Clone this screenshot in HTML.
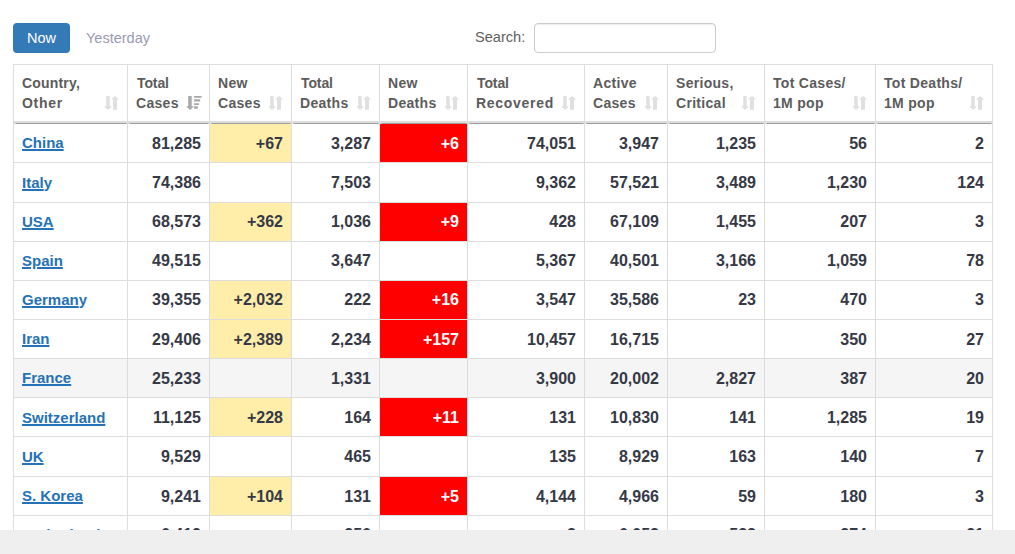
<!DOCTYPE html>
<html><head><meta charset="utf-8">
<style>
*{box-sizing:border-box}
html,body{margin:0;padding:0;background:#fff;width:1015px;height:554px;overflow:hidden}
body{font-family:"Liberation Sans",sans-serif;font-size:14px;line-height:20px;color:#333;position:relative}
.pill{position:absolute;left:13px;top:23px;width:57px;height:30px;background:#337ab7;color:#fff;border-radius:4px;text-align:center;line-height:30px;font-size:14.5px}
.yest{position:absolute;left:86px;top:23px;line-height:30px;color:#9a9ab4;font-size:14.5px}
.slabel{position:absolute;left:475px;top:27px;line-height:20px;color:#606060;font-size:14.6px}
.sinput{position:absolute;left:534px;top:23px;width:182px;height:30px;border:1px solid #ccc;border-radius:4px;background:#fff;box-shadow:inset 0 1px 1px rgba(0,0,0,.075)}
table{position:absolute;left:13px;top:64px;border-collapse:collapse;table-layout:fixed;width:980px}
th,td{border:1px solid #ddd;padding:0 8px;overflow:hidden;white-space:nowrap}
th{height:57px;text-align:left;vertical-align:middle;font-size:14px;line-height:20px;color:#5c5c5c;font-weight:bold;letter-spacing:.3px;border-bottom:2px solid #ddd;position:relative}
td{vertical-align:top;padding-top:var(--p);font-size:16px;font-weight:bold;text-align:right;color:#363945;line-height:22px}
td:first-child{text-align:left;font-size:15px;padding-top:var(--q)}
td a{color:#2572b8;text-decoration:underline;text-decoration-thickness:2px;text-underline-offset:1px}
.t{margin-left:1px;letter-spacing:-.1px}
td a.nu{text-decoration:none}
td.y{background:#ffeeaa}
td.r{background:#ff0000;color:#fff}
tr.g td{background:#f5f5f5}
.ic{position:absolute;right:7px;top:31px}
.hl{position:absolute;top:123px;height:1px}
.bottom{position:absolute;left:0;top:530px;width:1015px;height:24px;background:#efefef}
</style></head><body>
<div class="pill">Now</div><div class="yest">Yesterday</div>
<div class="slabel">Search:</div><div class="sinput"></div>
<table>
<colgroup><col style="width:114px"><col style="width:82px"><col style="width:82px"><col style="width:88px"><col style="width:88px"><col style="width:117px"><col style="width:83px"><col style="width:97px"><col style="width:111px"><col style="width:117px"></colgroup>
<thead><tr>
<th><span style="letter-spacing:.18px">Country,</span><br><span style="letter-spacing:.7px">Other</span><svg class="ic" width="16" height="15" viewBox="0 0 16 15"><path fill="#e0e0e0" d="M2.2 0h3.5v10.2h2.3L4.05 14 .1 10.2h2.1zM11.1 0l4 3.6h-2.1v10.1H9V3.6H7.1z"/></svg></th><th><span class="t">Total</span><br>Cases<svg class="ic" width="16" height="15" viewBox="0 0 16 15"><path fill="#a8a8a8" d="M2.2 0h3.5v10.2h2.3L4.05 14 .1 10.2h2.1zM8.1 0h7.5v1.7H8.1zM8.1 3.2h6.1v2.4H8.1zM8.1 7.3h4.9v1.6H8.1zM8.1 10.2h3.7v2.6H8.1z"/></svg></th><th>New<br>Cases<svg class="ic" width="16" height="15" viewBox="0 0 16 15"><path fill="#e0e0e0" d="M2.2 0h3.5v10.2h2.3L4.05 14 .1 10.2h2.1zM11.1 0l4 3.6h-2.1v10.1H9V3.6H7.1z"/></svg></th><th><span class="t">Total</span><br>Deaths<svg class="ic" width="16" height="15" viewBox="0 0 16 15"><path fill="#e0e0e0" d="M2.2 0h3.5v10.2h2.3L4.05 14 .1 10.2h2.1zM11.1 0l4 3.6h-2.1v10.1H9V3.6H7.1z"/></svg></th><th>New<br>Deaths<svg class="ic" width="16" height="15" viewBox="0 0 16 15"><path fill="#e0e0e0" d="M2.2 0h3.5v10.2h2.3L4.05 14 .1 10.2h2.1zM11.1 0l4 3.6h-2.1v10.1H9V3.6H7.1z"/></svg></th><th><span class="t">Total</span><br><span style="letter-spacing:.7px">Recovered</span><svg class="ic" width="16" height="15" viewBox="0 0 16 15"><path fill="#e0e0e0" d="M2.2 0h3.5v10.2h2.3L4.05 14 .1 10.2h2.1zM11.1 0l4 3.6h-2.1v10.1H9V3.6H7.1z"/></svg></th><th>Active<br>Cases<svg class="ic" width="16" height="15" viewBox="0 0 16 15"><path fill="#e0e0e0" d="M2.2 0h3.5v10.2h2.3L4.05 14 .1 10.2h2.1zM11.1 0l4 3.6h-2.1v10.1H9V3.6H7.1z"/></svg></th><th>Serious,<br>Critical<svg class="ic" width="16" height="15" viewBox="0 0 16 15"><path fill="#e0e0e0" d="M2.2 0h3.5v10.2h2.3L4.05 14 .1 10.2h2.1zM11.1 0l4 3.6h-2.1v10.1H9V3.6H7.1z"/></svg></th><th>Tot Cases/<br>1M pop<svg class="ic" width="16" height="15" viewBox="0 0 16 15"><path fill="#e0e0e0" d="M2.2 0h3.5v10.2h2.3L4.05 14 .1 10.2h2.1zM11.1 0l4 3.6h-2.1v10.1H9V3.6H7.1z"/></svg></th><th>Tot Deaths/<br>1M pop<svg class="ic" width="16" height="15" viewBox="0 0 16 15"><path fill="#e0e0e0" d="M2.2 0h3.5v10.2h2.3L4.05 14 .1 10.2h2.1zM11.1 0l4 3.6h-2.1v10.1H9V3.6H7.1z"/></svg></th>
</tr></thead>
<tbody>
<tr style="height:41px;--p:10px;--q:9px"><td><a>China</a></td><td>81,285</td><td class="y">+67</td><td>3,287</td><td class="r">+6</td><td>74,051</td><td>3,947</td><td>1,235</td><td>56</td><td>2</td></tr>
<tr style="height:40px;--p:9px;--q:9px"><td><a>Ital</a><a class="nu">y</a></td><td>74,386</td><td></td><td>7,503</td><td></td><td>9,362</td><td>57,521</td><td>3,489</td><td>1,230</td><td>124</td></tr>
<tr style="height:39px;--p:8px;--q:8px"><td><a>USA</a></td><td>68,573</td><td class="y">+362</td><td>1,036</td><td class="r">+9</td><td>428</td><td>67,109</td><td>1,455</td><td>207</td><td>3</td></tr>
<tr style="height:39px;--p:8px;--q:8px"><td><a>Spain</a></td><td>49,515</td><td></td><td>3,647</td><td></td><td>5,367</td><td>40,501</td><td>3,166</td><td>1,059</td><td>78</td></tr>
<tr style="height:39px;--p:8px;--q:8px"><td><a>German</a><a class="nu">y</a></td><td>39,355</td><td class="y">+2,032</td><td>222</td><td class="r">+16</td><td>3,547</td><td>35,586</td><td>23</td><td>470</td><td>3</td></tr>
<tr style="height:39px;--p:9px;--q:8px"><td><a>Iran</a></td><td>29,406</td><td class="y">+2,389</td><td>2,234</td><td class="r">+157</td><td>10,457</td><td>16,715</td><td></td><td>350</td><td>27</td></tr>
<tr style="height:39px;--p:9px;--q:8px" class="g"><td><a>France</a></td><td>25,233</td><td></td><td>1,331</td><td></td><td>3,900</td><td>20,002</td><td>2,827</td><td>387</td><td>20</td></tr>
<tr style="height:39px;--p:9px;--q:9px"><td><a>Switzerland</a></td><td>11,125</td><td class="y">+228</td><td>164</td><td class="r">+11</td><td>131</td><td>10,830</td><td>141</td><td>1,285</td><td>19</td></tr>
<tr style="height:40px;--p:9px;--q:9px"><td><a>UK</a></td><td>9,529</td><td></td><td>465</td><td></td><td>135</td><td>8,929</td><td>163</td><td>140</td><td>7</td></tr>
<tr style="height:39px;--p:9px;--q:8px"><td><a>S. Korea</a></td><td>9,241</td><td class="y">+104</td><td>131</td><td class="r">+5</td><td>4,144</td><td>4,966</td><td>59</td><td>180</td><td>3</td></tr>
<tr style="height:39px;--p:8px;--q:8px"><td><a>Netherlands</a></td><td>6,412</td><td></td><td>356</td><td></td><td>3</td><td>6,053</td><td>533</td><td>374</td><td>21</td></tr>
</tbody></table>
<div class="hl" style="left:13px;width:980px;background:#dedede"></div><div class="hl" style="left:15px;width:112px;background:#c4c4c4"></div><div class="hl" style="left:16px;width:110px;background:#9e9e9e"></div><div class="hl" style="left:129px;width:80px;background:#c4c4c4"></div><div class="hl" style="left:130px;width:78px;background:#9e9e9e"></div><div class="hl" style="left:211px;width:80px;background:#c4c4c4"></div><div class="hl" style="left:212px;width:78px;background:#9e9e9e"></div><div class="hl" style="left:293px;width:86px;background:#c4c4c4"></div><div class="hl" style="left:294px;width:84px;background:#9e9e9e"></div><div class="hl" style="left:381px;width:86px;background:#c4c4c4"></div><div class="hl" style="left:382px;width:84px;background:#9e9e9e"></div><div class="hl" style="left:469px;width:115px;background:#c4c4c4"></div><div class="hl" style="left:470px;width:113px;background:#9e9e9e"></div><div class="hl" style="left:586px;width:81px;background:#c4c4c4"></div><div class="hl" style="left:587px;width:79px;background:#9e9e9e"></div><div class="hl" style="left:669px;width:95px;background:#c4c4c4"></div><div class="hl" style="left:670px;width:93px;background:#9e9e9e"></div><div class="hl" style="left:766px;width:109px;background:#c4c4c4"></div><div class="hl" style="left:767px;width:107px;background:#9e9e9e"></div><div class="hl" style="left:877px;width:115px;background:#c4c4c4"></div><div class="hl" style="left:878px;width:113px;background:#9e9e9e"></div>
<div class="bottom"></div>
</body></html>
